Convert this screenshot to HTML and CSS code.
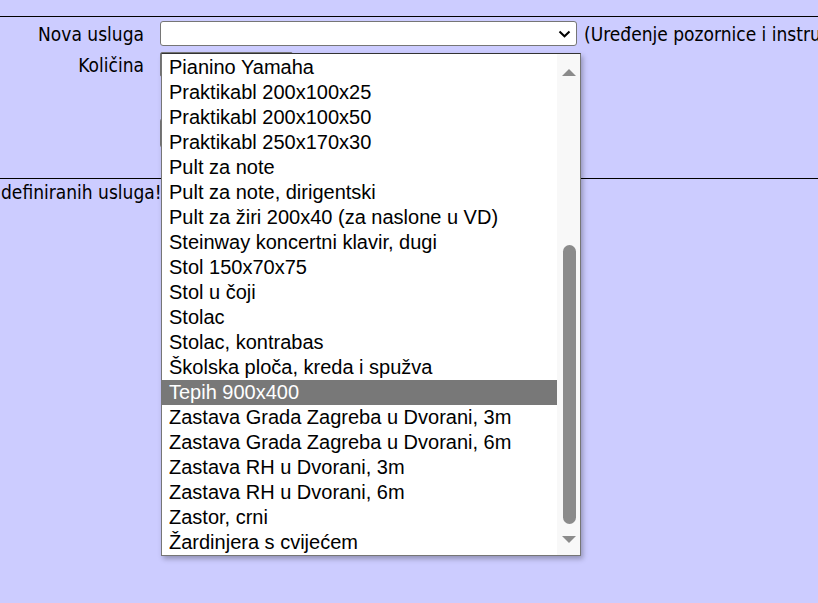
FILE: index.html
```html
<!DOCTYPE html>
<html>
<head>
<meta charset="utf-8">
<link rel="stylesheet" href="styles.css">
</head>
<body>
<div class="page">
  <div class="rule-top"></div>
  <div class="form">
    <div class="row r1">
      <span class="lbl">Nova usluga</span>
      <div class="select">
        <svg class="chev" width="13" height="8" viewBox="0 0 13 8"><path d="M1.5 1.5 L6.5 6.3 L11.5 1.5" fill="none" stroke="#000" stroke-width="2"/></svg>
      </div>
      <span class="note">(Uređenje pozornice i instrumenata)</span>
    </div>
    <div class="row r2">
      <span class="lbl">Količina</span>
      <div class="input"></div>
    </div>
    <div class="row r3">
      <span class="lbl"></span>
      <div class="btn">Dodaj</div>
    </div>
  </div>
  <div class="rule"></div>
  <div class="msg">definiranih usluga!</div>

  <div class="dropdown">
    <ul class="items">
      <li>Pianino Yamaha</li>
      <li>Praktikabl 200x100x25</li>
      <li>Praktikabl 200x100x50</li>
      <li>Praktikabl 250x170x30</li>
      <li>Pult za note</li>
      <li>Pult za note, dirigentski</li>
      <li>Pult za žiri 200x40 (za naslone u VD)</li>
      <li>Steinway koncertni klavir, dugi</li>
      <li>Stol 150x70x75</li>
      <li>Stol u čoji</li>
      <li>Stolac</li>
      <li>Stolac, kontrabas</li>
      <li>Školska ploča, kreda i spužva</li>
      <li class="sel">Tepih 900x400</li>
      <li>Zastava Grada Zagreba u Dvorani, 3m</li>
      <li>Zastava Grada Zagreba u Dvorani, 6m</li>
      <li>Zastava RH u Dvorani, 3m</li>
      <li>Zastava RH u Dvorani, 6m</li>
      <li>Zastor, crni</li>
      <li>Žardinjera s cvijećem</li>
    </ul>
    <div class="scrollbar">
      <div class="arrow up"></div>
      <div class="track"><div class="thumb"></div></div>
      <div class="arrow down"></div>
    </div>
  </div>
</div>
</body>
</html>
```
FILE: styles.css
```css
html, body {
  margin: 0;
  padding: 0;
  background: #ccccff;
  overflow: hidden;
}
body {
  font-family: "DejaVu Sans Condensed", "DejaVu Sans", sans-serif;
  font-stretch: condensed;
  font-size: 19px;
  color: #000;
}
.page {
  position: relative;
  width: 818px;
  height: 603px;
  overflow: hidden;
}
.rule-top {
  height: 16px;
  border-bottom: 1px solid #000;
}
.form {
  padding-top: 4px;
  display: flex;
  flex-direction: column;
}
.row {
  display: flex;
  align-items: center;
  white-space: nowrap;
}
.lbl {
  width: 144px;
  flex: none;
  text-align: right;
  margin-right: 16px;
}
.select {
  flex: none;
  width: 417px;
  height: 25px;
  box-sizing: border-box;
  border: 1px solid #767676;
  border-radius: 3px;
  background: #fff;
  display: flex;
  align-items: center;
  justify-content: flex-end;
  padding-right: 5px;
}
.note {
  margin-left: 7px;
}
.r2 {
  margin-top: 6px;
}
.input {
  width: 133px;
  height: 25px;
  box-sizing: border-box;
  border: 1px solid #767676;
  border-radius: 2px;
  background: #fff;
}
.r3 {
  margin-top: 41px;
}
.btn {
  height: 30px;
  box-sizing: border-box;
  border: 1px solid #767676;
  border-radius: 3px;
  background: #efefef;
  padding: 0 12px;
  display: flex;
  align-items: center;
}
.rule {
  margin-top: 30px;
  border-top: 1px solid #000;
}
.msg {
  padding: 2px 0 0 1px;
  white-space: nowrap;
}
.dropdown {
  position: absolute;
  left: 161px;
  top: 53px;
  width: 420px;
  height: 503px;
  box-sizing: border-box;
  border: 1px solid #767676;
  border-top-color: #333;
  background: #fff;
  display: flex;
  box-shadow: 2px 3px 5px rgba(0, 0, 0, 0.28);
  font-family: "Liberation Sans", Arial, sans-serif;
  font-stretch: normal;
}
.items {
  list-style: none;
  margin: 0;
  padding: 1px 0 0 0;
  flex: 1;
  font-size: 20px;
}
.items li {
  height: 25px;
  line-height: 25px;
  padding-left: 7px;
  white-space: nowrap;
  overflow: hidden;
}
.items li.sel {
  background: #787878;
  color: #fff;
}
.scrollbar {
  width: 23px;
  flex: none;
  background: #f8f8f8;
  display: flex;
  flex-direction: column;
  align-items: center;
}
.arrow {
  width: 0;
  height: 0;
  border-left: 7px solid transparent;
  border-right: 7px solid transparent;
  margin-left: 1px;
}
.arrow.up {
  margin-top: 15px;
  border-bottom: 7px solid #8b8b8b;
}
.arrow.down {
  margin-bottom: 12px;
  border-top: 7px solid #8b8b8b;
}
.track {
  flex: 1;
  width: 100%;
  display: flex;
  flex-direction: column;
  justify-content: flex-end;
  align-items: center;
  padding-bottom: 12px;
  box-sizing: border-box;
}
.thumb {
  width: 13px;
  height: 279px;
  border-radius: 7px;
  background: #8b8b8b;
  margin-left: 1px;
}
```
